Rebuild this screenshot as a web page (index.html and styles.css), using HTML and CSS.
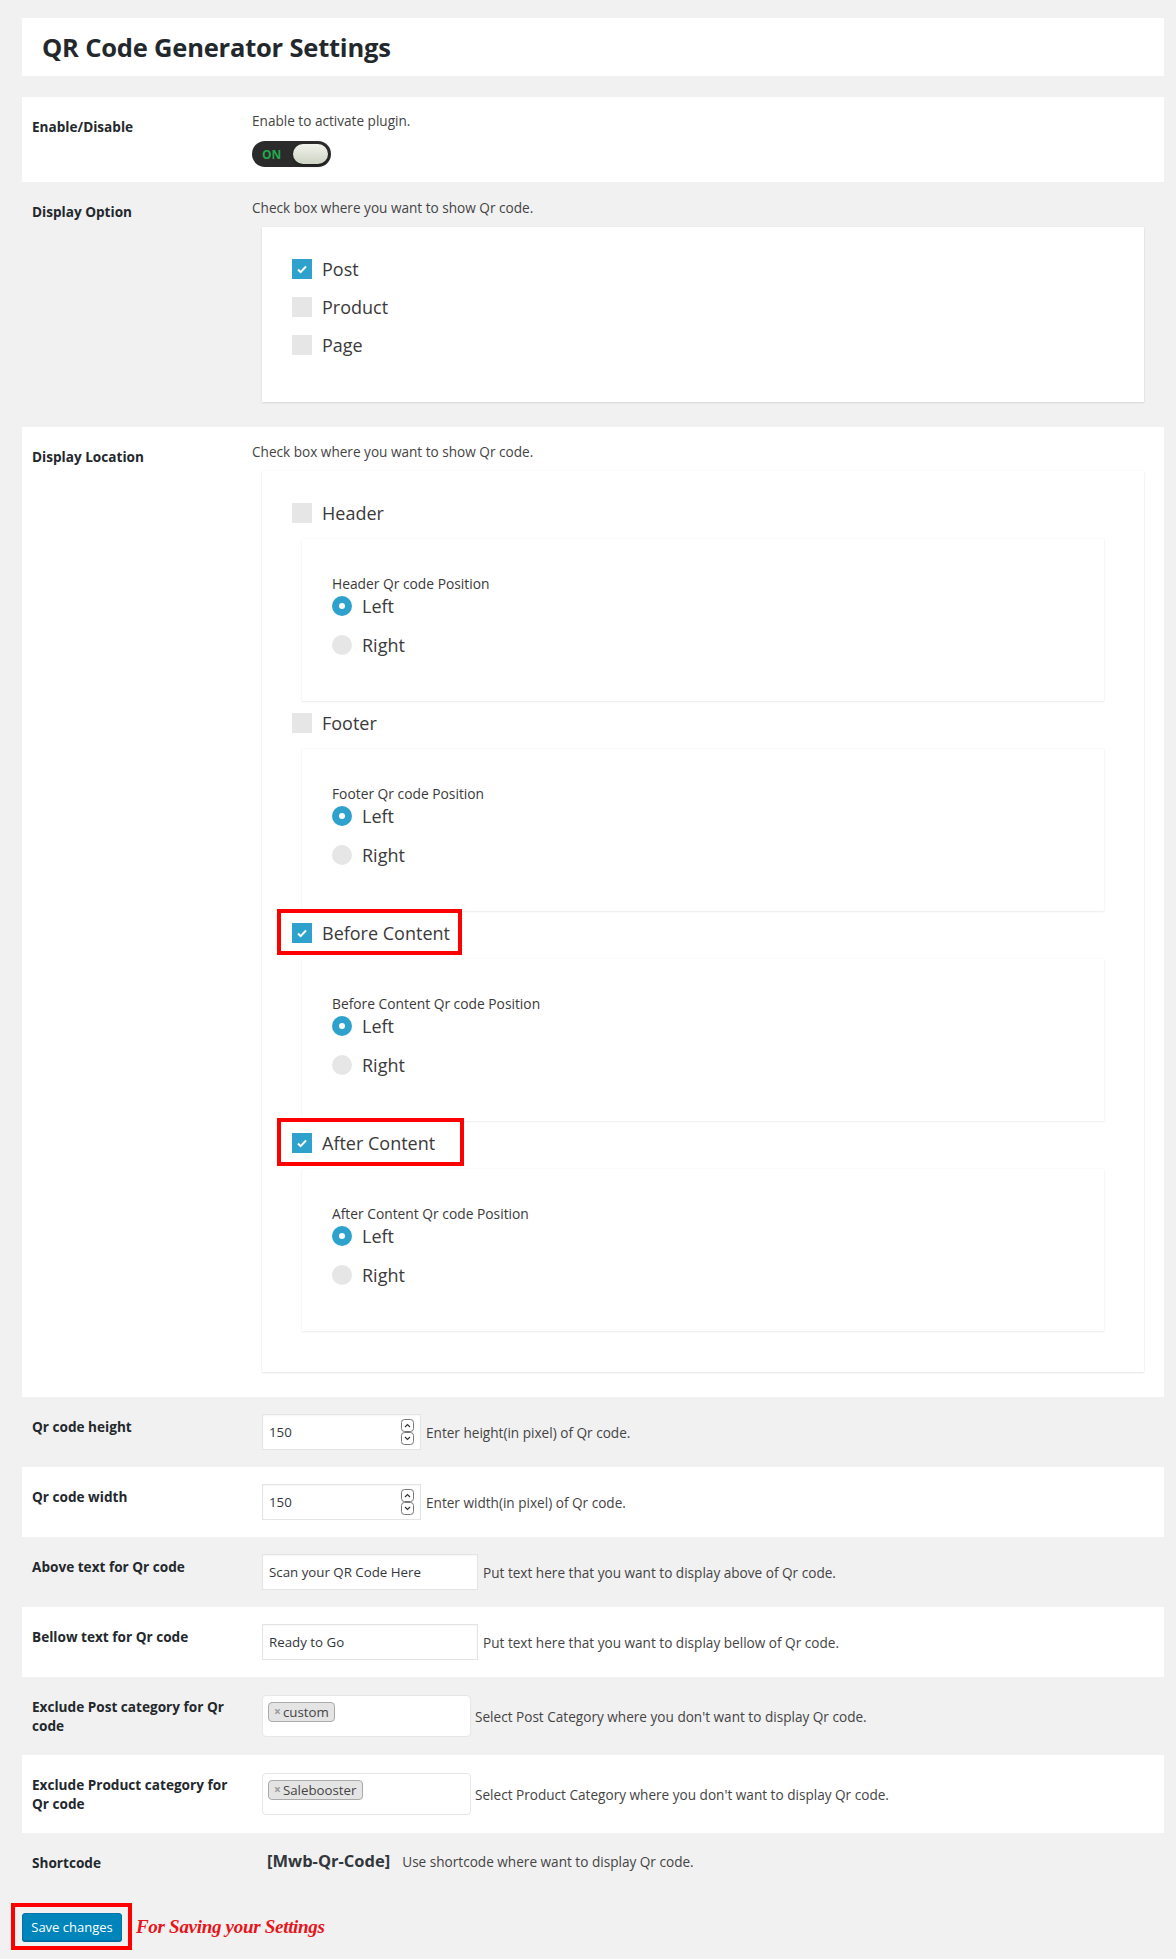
FILE: index.html
```html
<!DOCTYPE html>
<html lang="en">
<head>
<meta charset="utf-8">
<title>QR Code Generator Settings</title>
<link rel="stylesheet" href="styles.css">
</head>
<body>
<div class="wrap">
  <div class="title-panel"><h1>QR Code Generator Settings</h1></div>

  <div class="form">
    <div class="row">
      <div class="th">Enable/Disable</div>
      <div class="td">
        <p class="desc">Enable to activate plugin.</p>
        <div class="toggle"><span class="on">ON</span><span class="knob"></span></div>
      </div>
    </div>

    <div class="row">
      <div class="th">Display Option</div>
      <div class="td">
        <p class="desc">Check box where you want to show Qr code.</p>
        <div class="box opts">
          <label class="check"><span class="cb checked"><svg viewBox="0 0 20 20"><path d="M6 10.5l2.6 2.6L14 7.5" fill="none" stroke="#fff" stroke-width="2"/></svg></span>Post</label>
          <label class="check"><span class="cb"></span>Product</label>
          <label class="check"><span class="cb"></span>Page</label>
        </div>
      </div>
    </div>

    <div class="row">
      <div class="th">Display Location</div>
      <div class="td">
        <p class="desc">Check box where you want to show Qr code.</p>
        <div class="box locs">
          <div class="loc">
            <label class="check"><span class="cb"></span>Header</label>
            <div class="sub">
              <div class="sub-label">Header Qr code Position</div>
              <label class="radio"><span class="rb checked"></span>Left</label>
              <label class="radio"><span class="rb"></span>Right</label>
            </div>
          </div>
          <div class="loc">
            <label class="check"><span class="cb"></span>Footer</label>
            <div class="sub">
              <div class="sub-label">Footer Qr code Position</div>
              <label class="radio"><span class="rb checked"></span>Left</label>
              <label class="radio"><span class="rb"></span>Right</label>
            </div>
          </div>
          <div class="loc">
            <label class="check marked"><span class="cb checked"><svg viewBox="0 0 20 20"><path d="M6 10.5l2.6 2.6L14 7.5" fill="none" stroke="#fff" stroke-width="2"/></svg></span>Before Content</label>
            <div class="sub">
              <div class="sub-label">Before Content Qr code Position</div>
              <label class="radio"><span class="rb checked"></span>Left</label>
              <label class="radio"><span class="rb"></span>Right</label>
            </div>
          </div>
          <div class="loc">
            <label class="check marked wide"><span class="cb checked"><svg viewBox="0 0 20 20"><path d="M6 10.5l2.6 2.6L14 7.5" fill="none" stroke="#fff" stroke-width="2"/></svg></span>After Content</label>
            <div class="sub">
              <div class="sub-label">After Content Qr code Position</div>
              <label class="radio"><span class="rb checked"></span>Left</label>
              <label class="radio"><span class="rb"></span>Right</label>
            </div>
          </div>
        </div>
      </div>
    </div>

    <div class="row">
      <div class="th">Qr code height</div>
      <div class="td inline">
        <div class="field num"><span>150</span>
          <svg class="spin" viewBox="0 0 14 26"><rect x="0.5" y="0.5" width="12" height="12" rx="3" fill="#fff" stroke="#777"/><rect x="0.5" y="13.5" width="12" height="12" rx="3" fill="#fff" stroke="#777"/><path d="M4 8l2.5-2.5L9 8" fill="none" stroke="#333" stroke-width="1.2"/><path d="M4 18l2.5 2.5L9 18" fill="none" stroke="#333" stroke-width="1.2"/></svg>
        </div>
        <span class="hint">Enter height(in pixel) of Qr code.</span>
      </div>
    </div>

    <div class="row">
      <div class="th">Qr code width</div>
      <div class="td inline">
        <div class="field num"><span>150</span>
          <svg class="spin" viewBox="0 0 14 26"><rect x="0.5" y="0.5" width="12" height="12" rx="3" fill="#fff" stroke="#777"/><rect x="0.5" y="13.5" width="12" height="12" rx="3" fill="#fff" stroke="#777"/><path d="M4 8l2.5-2.5L9 8" fill="none" stroke="#333" stroke-width="1.2"/><path d="M4 18l2.5 2.5L9 18" fill="none" stroke="#333" stroke-width="1.2"/></svg>
        </div>
        <span class="hint">Enter width(in pixel) of Qr code.</span>
      </div>
    </div>

    <div class="row">
      <div class="th">Above text for Qr code</div>
      <div class="td inline">
        <div class="field text"><span>Scan your QR Code Here</span></div>
        <span class="hint">Put text here that you want to display above of Qr code.</span>
      </div>
    </div>

    <div class="row">
      <div class="th">Bellow text for Qr code</div>
      <div class="td inline">
        <div class="field text"><span>Ready to Go</span></div>
        <span class="hint">Put text here that you want to display bellow of Qr code.</span>
      </div>
    </div>

    <div class="row tall">
      <div class="th">Exclude Post category for Qr code</div>
      <div class="td inline">
        <div class="select"><span class="tag"><span class="x">×</span>custom</span></div>
        <span class="hint narrow">Select Post Category where you don't want to display Qr code.</span>
      </div>
    </div>

    <div class="row tall">
      <div class="th">Exclude Product category for Qr code</div>
      <div class="td inline">
        <div class="select"><span class="tag"><span class="x">×</span>Salebooster</span></div>
        <span class="hint narrow">Select Product Category where you don't want to display Qr code.</span>
      </div>
    </div>

    <div class="row short">
      <div class="th">Shortcode</div>
      <div class="td inline">
        <span class="code">[Mwb-Qr-Code]</span>
        <span class="hint code-hint">Use shortcode where want to display Qr code.</span>
      </div>
    </div>
  </div>

  <div class="submit">
    <span class="btn-wrap"><button class="button" type="button">Save changes</button></span>
    <span class="note">For Saving your Settings</span>
  </div>
</div>
</body>
</html>
```

FILE: styles.css
```css
*, *::before, *::after { box-sizing: border-box; }

body {
  margin: 0;
  background: #f1f1f1;
  font-family: "Open Sans", "Noto Sans", sans-serif;
  font-size: 13.6px;
  color: #444;
}

.wrap {
  padding: 18px 12px 20px 22px;
}

.title-panel {
  background: #fff;
  height: 58px;
  padding-left: 20px;
  display: flex;
  align-items: center;
}

.title-panel h1 {
  margin: 0;
  font-size: 25.5px;
  font-weight: 700;
  color: #23282d;
  letter-spacing: -0.2px;
}

.form {
  margin-top: 21px;
}

.row {
  display: grid;
  grid-template-columns: 220px 1fr;
  padding-left: 10px;
}

.row:nth-child(odd) {
  background: #fff;
}

.th {
  padding: 20px 10px 0 0;
  font-weight: 700;
  color: #23282d;
  line-height: 19px;
}

.td {
  padding: 15px 0 15px 0;
}

.desc {
  margin: 0;
  line-height: 18px;
}

/* toggle */
.toggle {
  margin-top: 11px;
  width: 79px;
  height: 26px;
  border-radius: 13px;
  background: #2b2b2b;
  display: flex;
  align-items: center;
  justify-content: space-between;
  padding: 0 3px 0 10px;
}

.toggle .on {
  color: #22a84c;
  font-weight: 700;
  font-size: 12px;
}

.toggle .knob {
  width: 35px;
  height: 20px;
  border-radius: 10px;
  background: linear-gradient(#f1f3ec, #cdd4c3);
  box-shadow: 0 2px 3px rgba(0, 0, 0, 0.35);
}

/* boxes */
.box {
  background: #fff;
  margin: 10px 20px 0 10px;
  box-shadow: 0 1px 2px rgba(0, 0, 0, 0.1), 0 0 1px rgba(0, 0, 0, 0.08);
}

.row:nth-child(2) .td {
  padding-bottom: 25px;
  padding-top: 17px;
}

.opts {
  padding: 32px 40px 47px 30px;
  display: flex;
  flex-direction: column;
  gap: 18px;
}

.locs {
  padding: 32px 40px 41px 30px;
  display: flex;
  flex-direction: column;
  gap: 12px;
}

.row:nth-child(3) .td {
  padding-bottom: 25px;
  padding-top: 16px;
}

.check,
.radio {
  position: relative;
  display: flex;
  align-items: center;
  gap: 10px;
  height: 20px;
  font-size: 18px;
  color: #3a3a3a;
  width: max-content;
}

.cb {
  width: 20px;
  height: 20px;
  background: #e6e6e6;
  flex: none;
  display: block;
}

.cb.checked {
  background: #2ea2cc;
}

.cb svg {
  display: block;
  width: 20px;
  height: 20px;
}

.rb {
  width: 20px;
  height: 20px;
  border-radius: 50%;
  background: #e6e6e6;
  flex: none;
  display: flex;
  align-items: center;
  justify-content: center;
}

.rb.checked {
  background: #2ea2cc;
}

.rb.checked::after {
  content: "";
  width: 6px;
  height: 6px;
  border-radius: 50%;
  background: #fff;
}

.check.marked::after {
  content: "";
  position: absolute;
  left: -15px;
  top: -14px;
  width: 185px;
  height: 46px;
  border: 4px solid #ff0000;
}

.check.marked.wide::after {
  width: 187px;
  height: 48px;
  top: -15px;
}

.sub {
  margin: 16px 0 0 10px;
  padding: 36px 30px 46px 30px;
  background: #fff;
  box-shadow: 0 1px 2px rgba(0, 0, 0, 0.07), 0 0 1px rgba(0, 0, 0, 0.07);
}

.sub-label {
  line-height: 18px;
  font-size: 13.8px;
  color: #3a3a3a;
  margin-bottom: 3px;
}

.sub .radio + .radio {
  margin-top: 19px;
}

/* lower rows */
.td.inline {
  display: flex;
  align-items: center;
  padding: 17px 0;
}

.field {
  margin-left: 10px;
  height: 36px;
  background: #fff;
  border: 1px solid #e4e4e4;
  box-shadow: inset 0 1px 2px rgba(0, 0, 0, 0.04);
  display: flex;
  align-items: center;
  justify-content: space-between;
  padding: 0 5px 0 6px;
  color: #32373c;
  font-size: 13.3px;
  flex: none;
}

.field.num {
  width: 159px;
}

.field.text {
  width: 216px;
}

.spin {
  width: 14px;
  height: 26px;
  display: block;
}

.hint {
  margin-left: 5px;
}

.row.tall .td.inline {
  padding: 18px 0;
}

.select {
  margin-left: 10px;
  width: 209px;
  height: 42px;
  flex: none;
  background: #fff;
  border: 1px solid #e6e6e6;
  border-radius: 4px;
  padding: 5px 0 0 5px;
}

.tag {
  display: inline-flex;
  align-items: center;
  height: 20px;
  padding: 0 5px;
  background: #e4e4e4;
  border: 1px solid #aaa;
  border-radius: 4px;
  color: #444;
  font-size: 13.3px;
  line-height: 18px;
}

.tag .x {
  color: #999;
  font-weight: 700;
  font-size: 12px;
  margin-right: 2px;
}

.hint.narrow {
  margin-left: 4px;
}

.row.short .td.inline {
  padding: 16px 0 14px;
}

.code {
  margin-left: 15px;
  font-size: 16.5px;
  font-weight: 700;
  color: #32373c;
  line-height: 24px;
}

.code-hint {
  margin-left: 12px;
}

/* submit */
.submit {
  margin-top: 26px;
  display: flex;
  align-items: center;
}

.btn-wrap {
  position: relative;
  display: block;
}

.btn-wrap::after {
  content: "";
  position: absolute;
  left: -11px;
  top: -10px;
  width: 121px;
  height: 47px;
  border: 4px solid #ff0000;
}

.button {
  display: block;
  width: 100px;
  height: 28px;
  padding: 0;
  background: #0085ba;
  border: 1px solid #0073aa;
  border-radius: 3px;
  box-shadow: 0 1px 0 #006799;
  color: #fff;
  font-family: "Open Sans", "Noto Sans", sans-serif;
  font-size: 13px;
  cursor: pointer;
}

.note {
  margin-left: 14px;
  color: #e8141b;
  font-family: "Liberation Serif", "DejaVu Serif", serif;
  font-style: italic;
  font-weight: 700;
  font-size: 19px;
  letter-spacing: -0.3px;
}
```
